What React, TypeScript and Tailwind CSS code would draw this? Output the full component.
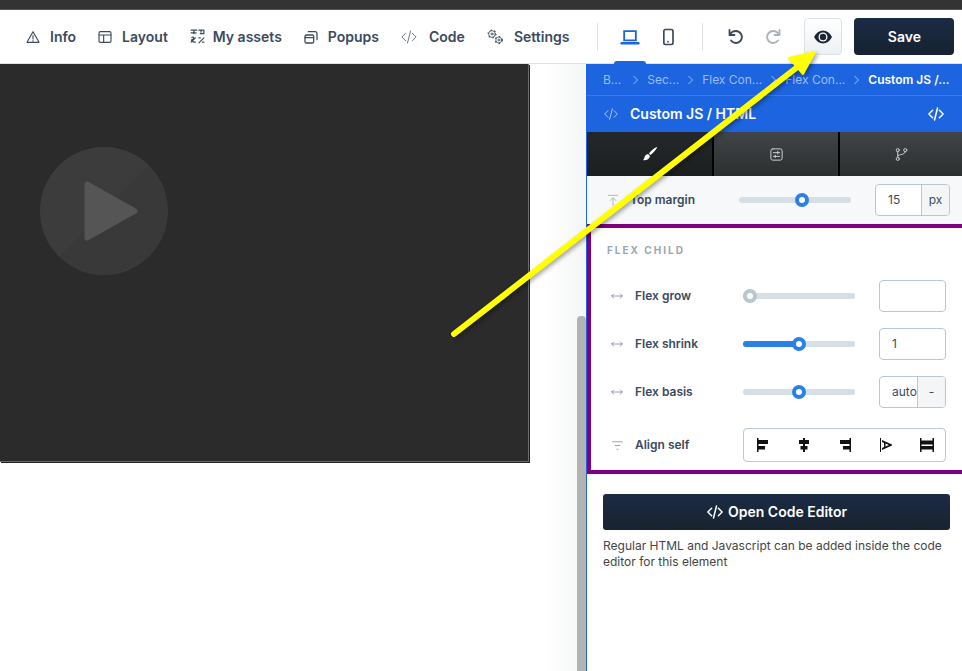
import React from "react";

const ff = { fontFamily: "Inter, sans-serif" };

function I({ children, className = "", size = 16, sw = 1.5 }: any) {
  return (
    <svg width={size} height={size} viewBox="0 0 24 24" fill="none" stroke="currentColor" strokeWidth={sw} strokeLinecap="round" strokeLinejoin="round" className={className}>
      {children}
    </svg>
  );
}

const CodeIcon = ({ size = 16, sw = 1.5, className = "" }: any) => (
  <I size={size} sw={sw} className={className}>
    <path d="M7.5 7 2.5 12l5 5M16.5 7l5 5-5 5M14 4l-4 16" />
  </I>
);

function NavItem({ icon, label, gap = "gap-[9px]" }: any) {
  return (
    <div className={`flex items-center ${gap} text-[14px] font-semibold text-[#3b4a5e]`}>
      {icon}
      <span>{label}</span>
    </div>
  );
}

function Slider({ pct, on, off, w = "w-[112px]" }: any) {
  return (
    <div className={`relative h-[6px] ${w} rounded-full bg-[#d6dfe5]`}>
      {on && <div className="absolute left-0 top-0 h-[6px] rounded-full bg-[#2b7fe8]" style={{ width: `${pct}%` }} />}
      <div
        className={`absolute top-1/2 h-[14px] w-[14px] -translate-x-1/2 -translate-y-1/2 rounded-full border-[4px] bg-white ${off ? "border-[#b8c6d1]" : "border-[#2b7fe8]"}`}
        style={{ left: `${pct}%` }}
      />
    </div>
  );
}

const Arrows = () => (
  <I size={16} sw={1.2} className="text-[#7c8b99]">
    <path d="M4 12h16M7 9l-3 3 3 3M17 9l3 3-3 3" />
  </I>
);

function Row({ label, pct, on, off, children, className = "" }: any) {
  return (
    <div className={`flex items-center ${className}`}>
      <div className="flex w-[20px] justify-center"><Arrows /></div>
      <span className="ml-[8px] w-[108px] text-[12px] font-semibold text-[#3b4a5e]">{label}</span>
      <Slider pct={pct} on={on} off={off} />
      <div className="ml-[24px]">{children}</div>
    </div>
  );
}

const Flag = ({ children }: any) => (
  <svg width="16" height="16" viewBox="0 0 16 16" fill="#111" stroke="none">{children}</svg>
);

function Gear({ cx, cy, r }: any) {
  return (
    <>
      <circle cx={cx} cy={cy} r={r} />
      <circle cx={cx} cy={cy} r={r * 0.3} />
      <circle cx={cx} cy={cy} r={r + 0.8} strokeWidth={1.4} strokeDasharray="2 3.500" strokeLinecap="butt" />
    </>
  );
}

export default function App() {
  return (
    <div style={ff} className="relative flex h-[671px] w-[962px] flex-col overflow-hidden bg-white">
      <div className="h-[9px] bg-[#333333]" />
      <header className="flex h-[55px] items-center border-t border-b border-t-[#555] border-b-[#dde3e8] bg-white pl-[25px]">
        <div className="flex items-center gap-[21px]">
          <NavItem label="Info" icon={<I sw={1.7}><path d="M12 4 3 20h18L12 4zM12 10v5M12 17.500v.5" /></I>} />
          <NavItem label="Layout" icon={<I sw={1.7}><rect x="3" y="4" width="18" height="16" rx="2" /><path d="M3 9h18M10 9v11" /></I>} />
          <NavItem label="My assets" gap="gap-[7px]" icon={<I size={17} sw={1.7}><path d="M3 3h8M7 3v5M3 7h7M14 3h7v5h-5M17 3v3M3 20l6-6M4 13c3-1 4 2 1 3s-1 4 4 4M14 21l7-7M14 14h2M19 20h2" /></I>} />
          <NavItem label="Popups" icon={<I sw={1.9}><rect x="3" y="9" width="13" height="12" rx="2" /><path d="M3 13h13M8 4h10a3 3 0 0 1 3 3v9" /></I>} />
          <NavItem label="Code" gap="gap-[11px]" icon={<CodeIcon size={18} sw={1} />} />
          <NavItem label="Settings" gap="gap-[10px]" icon={<I size={18} sw={1.1}><Gear cx={8} cy={8} r={4.5} /><Gear cx={17} cy={16} r={4} /></I>} />
        </div>
        <div className="ml-[28px] h-[28px] w-px bg-[#dde3e8]" />
        <div className="relative ml-[16px] flex h-[32px] w-[32px] items-center justify-center text-[#1c64e0]">
          <svg width="20" height="20" viewBox="0 0 24 24" fill="none" stroke="currentColor" strokeWidth="2.2"><path d="M5 5h14v11H5z" /><path d="M2 19.500h20" strokeWidth="3" strokeLinecap="round" /></svg>
          <div className="absolute -bottom-[11px] left-0 h-[3px] w-[32px] rounded-t bg-[#1c64e0]" />
        </div>
        <div className="ml-[6px] flex h-[32px] w-[32px] items-center justify-center text-[#3b4a5e]">
          <I size={20} sw={2}><rect x="7" y="3" width="11" height="18" rx="2" /><path d="M12 17.500v.5" /></I>
        </div>
        <div className="ml-[18px] h-[28px] w-px bg-[#dde3e8]" />
        <svg width="18" height="18" viewBox="0 0 18 18" fill="none" stroke="#3b4a5e" strokeWidth="1.800" strokeLinecap="round" strokeLinejoin="round" className="ml-[24px]"><path d="M2.500 2v5h5" /><path d="M2.800 7C4 4.300 6.300 3 9 3a6 6 0 1 1-5 9.500" /></svg>
        <svg width="18" height="18" viewBox="0 0 18 18" fill="none" stroke="#a9b3bc" strokeWidth="1.800" strokeLinecap="round" strokeLinejoin="round" className="ml-[19px]"><path d="M15.500 2v5h-5" /><path d="M15.200 7C14 4.300 11.700 3 9 3a6 6 0 1 0 5 9.500" /></svg>
        <div className="ml-[22px] flex h-[37px] w-[38px] items-center justify-center rounded-[4px] border border-[#dbe2e7] bg-gradient-to-b from-white to-[#eef1f4]">
          <svg width="20" height="20" viewBox="0 0 20 20"><path d="M1 10c2.500-4.500 5.500-6.500 9-6.500s6.500 2 9 6.500c-2.500 4.500-5.500 6.500-9 6.500s-6.500-2-9-6.500z" fill="#1c2733" /><circle cx="10" cy="10" r="4.500" fill="#fff" /><circle cx="10" cy="10" r="3.200" fill="#1c2733" /></svg>
        </div>
        <button className="ml-[12px] h-[37px] w-[100px] rounded-[4px] bg-gradient-to-b from-[#1b2b45] to-[#162230] text-[14px] font-semibold text-white">Save</button>
      </header>
      <main className="flex min-h-0 flex-1">
        <div className="w-[586px] shrink-0 bg-gradient-to-r from-white from-[93%] to-[#f5f6f6]">
          <div className="relative h-[398px] w-[529px] border-r border-b border-r-[#6b6b6b] border-b-[#6b6b6b] bg-[#2b2b2b] shadow-[1px_1px_0_#222]">
            <div className="absolute left-[40px] top-[83px] flex h-[128px] w-[128px] items-center justify-center rounded-full bg-gradient-to-br from-[#3c3c3c] from-50% to-[#393939] to-50%">
              <svg width="56" height="60" viewBox="0 0 56 60" className="ml-[14px]"><path d="M4 3 52 30 4 57z" fill="#555" stroke="#555" strokeWidth="5" strokeLinejoin="round" /></svg>
            </div>
          </div>
        </div>
        <aside className="w-[376px] min-w-0 border-l border-l-[#1c64e0] bg-white">
          <div className="flex h-[32px] items-center gap-[9px] whitespace-nowrap border-b border-b-[#3d7ae6] bg-[#1c64e0] pl-[16px] text-[12px] text-[#9dbdf2]">
            <span className="mr-[3px]">B...</span><Chevron /><span>Sec...</span><Chevron /><span>Flex Con...</span><Chevron /><span>Flex Con...</span><Chevron /><span className="font-semibold text-white">Custom JS /...</span>
          </div>
          <div className="flex h-[36px] items-center bg-[#1c64e0] pl-[16px] pr-[17px] text-white">
            <CodeIcon size={16} sw={1.5} className="text-[#a9c5f5]" />
            <span className="ml-[11px] flex-1 pb-[1px] text-[14px] font-semibold">Custom JS / HTML</span>
            <CodeIcon size={18} sw={2} />
          </div>
          <div className="grid h-[44px] grid-cols-[125px_124px_1fr] gap-[2px] bg-black">
            <div className="flex items-center justify-center bg-gradient-to-b from-[#24282a] to-[#1c1f20]">
              <svg width="16" height="16" viewBox="0 0 16 16" fill="#fff"><path d="M15 1c.6.6-3.500 5.800-6.500 8L7 7.500C9 4.500 14.400.4 15 1zM6.300 8.300l1.500 1.500C7.800 12.500 5 15 1 14c1.500-1 1.200-2.500 2-4 .7-1.200 2-1.800 3.300-1.700z" /></svg>
            </div>
            <div className="flex items-center justify-center bg-gradient-to-b from-[#414547] to-[#2c2f30] text-[#c9cfd3]">
              <I size={15} sw={1.6}><rect x="3" y="3" width="18" height="18" rx="3" /><path d="M7 9h10M14 7v4M7 15h10M10 13v4" /></I>
            </div>
            <div className="flex items-center justify-center bg-gradient-to-b from-[#414547] to-[#2c2f30] text-[#c9cfd3]">
              <I size={15} sw={1.6}><circle cx="6" cy="5" r="2.500" /><circle cx="6" cy="19" r="2.500" /><circle cx="18" cy="5" r="2.500" /><path d="M6 7.500v9M18 7.500c0 4-6 4-11 6" /></I>
            </div>
          </div>
          <div className="flex h-[48px] items-center bg-[#f6f8fa] pl-[19px]">
            <I size={14} sw={1.3} className="text-[#9aa7b3]"><path d="M4 4h16M12 21V9M7 13l5-5 5 5" /></I>
            <span className="ml-[10px] w-[109px] text-[12px] font-semibold text-[#3b4a5e]">Top margin</span>
            <Slider pct={56} />
            <div className="ml-[24px] flex h-[32px] w-[75px] overflow-hidden rounded-[4px] border border-[#b9c7d2] bg-white text-[12px] text-[#3b4a5e]">
              <span className="flex w-[45px] items-center pl-[12px]">15</span>
              <span className="flex flex-1 items-center justify-center border-l border-l-[#b9c7d2] bg-[#f3f5f6]">px</span>
            </div>
          </div>
          <section className="h-[250px] border-[4px] border-r-0 border-[#800080] pl-[16px] pr-[16px]">
            <div className="mt-[15px] text-[10px] font-bold uppercase tracking-[0.2em] text-[#9aa6b2]">Flex Child</div>
            <div className="mt-[22px] flex flex-col">
              <Row label="Flex grow" pct={6.25} off className="h-[32px]">
                <div className="h-[32px] w-[67px] rounded-[4px] border border-[#b9c7d2] bg-white" />
              </Row>
              <Row label="Flex shrink" pct={50} on className="mt-[16px] h-[32px]">
                <div className="flex h-[32px] w-[67px] items-center rounded-[4px] border border-[#b9c7d2] bg-white pl-[12px] text-[12px] text-[#3b4a5e]">1</div>
              </Row>
              <Row label="Flex basis" pct={50} className="mt-[16px] h-[32px]">
                <div className="flex h-[32px] w-[67px] overflow-hidden rounded-[4px] border border-[#b9c7d2] bg-white text-[12px] text-[#3b4a5e]">
                  <span className="flex w-[37px] items-center overflow-hidden pl-[12px]">auto</span>
                  <span className="flex flex-1 items-center justify-center border-l border-l-[#b9c7d2] bg-[#f3f5f6]">-</span>
                </div>
              </Row>
              <div className="mt-[20px] flex h-[34px] items-center">
                <div className="flex w-[20px] justify-center">
                  <I size={15} sw={1.2} className="text-[#7c8b99]"><path d="M4 6h16M8 12h8M11 18h2" /></I>
                </div>
                <span className="ml-[8px] w-[108px] text-[12px] font-semibold text-[#3b4a5e]">Align self</span>
                <div className="flex h-[34px] w-[203px] items-center gap-[25px] rounded-[4px] border border-[#b9c7d2] bg-white pl-[11px]">
                  <Flag><path d="M2 1h1.500v14H2zM3.500 3H13v4H3.500zM3.500 9H10v3.500H3.500z" /></Flag>
                  <Flag><path d="M7 1h2v14H7zM3 3h10v4H3zM4.500 9h7v3.500h-7z" /></Flag>
                  <Flag><path d="M12.500 1H14v14h-1.500zM3 3h9.500v4H3zM6 9h6.500v3.500H6z" /></Flag>
                  <Flag><path d="M2 1h1v14H2zM4 3l10 4.500v1L4 13v-2l2-1V6L4 5zM7.500 6.500v3L11 8z" /></Flag>
                  <Flag><path d="M1 1h1.500v14H1zM13.500 1H15v14h-1.500zM2.500 3.500h11v4h-11zM2.500 9h11v3.500h-11z" /></Flag>
                </div>
              </div>
            </div>
          </section>
          <div className="pl-[16px] pr-[12px] pt-[20px]">
            <button className="flex h-[36px] w-full items-center justify-center gap-[4px] rounded-[3px] bg-gradient-to-b from-[#1b2b45] to-[#18232f] pb-[1px] text-[14px] font-semibold text-white">
              <CodeIcon size={18} sw={2} />
              Open Code Editor
            </button>
            <p className="mt-[8px] text-[12px] leading-[16px] text-[#444]">Regular HTML and Javascript can be added inside the code editor for this element</p>
          </div>
        </aside>
      </main>
      <div className="absolute bottom-0 left-[577px] top-[316px] w-[9px] rounded-t-[4px] bg-[#b3b3b3]" />
      <svg className="pointer-events-none absolute left-0 top-0 drop-shadow-[2px_2px_2px_rgba(0,0,0,0.35)]" width="962" height="671" viewBox="0 0 962 671">
        <path d="M454 334 800 65" stroke="#ffff00" strokeWidth="6" strokeLinecap="round" />
        <path d="M815 52 789 58 803 74z" fill="#ffff00" stroke="#ffff00" strokeWidth="2" strokeLinejoin="round" />
      </svg>
    </div>
  );
}

function Chevron() {
  return (
    <svg width="5" height="10" viewBox="0 0 5 10" fill="none" stroke="#9dbdf2" strokeWidth="1"><path d="M.5 1l4 4-4 4" /></svg>
  );
}
